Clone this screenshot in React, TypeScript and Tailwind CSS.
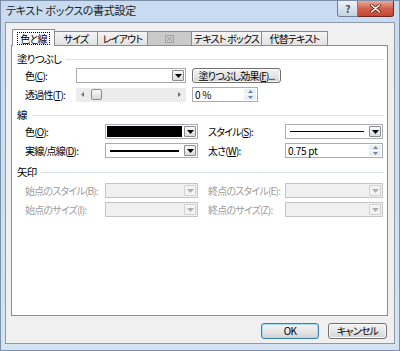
import React from 'react';

const font = "font-['Noto_Sans_CJK_JP',sans-serif] [font-feature-settings:'palt']";

function K({ children }: { children: React.ReactNode }) {
  return <span className="underline underline-offset-[1px]">{children}</span>;
}

function DownArrow({ disabled }: { disabled?: boolean }) {
  return (
    <svg width="7" height="4" viewBox="0 0 7 4">
      <path d="M0 0h7L3.5 4z" fill={disabled ? '#b0b0b0' : '#000'} />
    </svg>
  );
}

function DropBtn({ disabled }: { disabled?: boolean }) {
  return (
    <div
      className={`m-px flex w-[12px] items-center justify-center rounded-[1px] border ${
        disabled ? 'border-[#d2d2d2] bg-[#f3f3f3]' : 'border-[#8c8c8c] bg-linear-to-b from-[#f8f8f8] to-[#dcdcdc]'
      }`}
    >
      <DownArrow disabled={disabled} />
    </div>
  );
}

function Combo({ className, disabled, children }: { className: string; disabled?: boolean; children?: React.ReactNode }) {
  return (
    <div className={`flex h-[15px] shrink-0 border ${disabled ? 'border-[#c4c4c4] bg-[#f0f0f0]' : 'border-[#a9acb2] bg-white'} ${className}`}>
      <div className="flex min-w-0 flex-1 items-center p-px">{children}</div>
      <DropBtn disabled={disabled} />
    </div>
  );
}

function Spin({ className, value }: { className: string; value: string }) {
  return (
    <div className={`flex h-[15px] shrink-0 border border-[#a9acb2] bg-white ${className}`}>
      <div className="flex flex-1 items-center whitespace-pre pl-[2px] text-[10px] leading-none tracking-[-0.3px]">{value}</div>
      <div className="m-px flex w-[12px] flex-col gap-px">
        <div className="flex flex-1 items-center justify-center rounded-[1px] bg-[#e9eef5]">
          <svg width="5" height="3" viewBox="0 0 5 3">
            <path d="M0 3h5L2.5 0z" fill="#6d86a6" />
          </svg>
        </div>
        <div className="flex flex-1 items-center justify-center rounded-[1px] bg-[#e9eef5]">
          <svg width="5" height="3" viewBox="0 0 5 3">
            <path d="M0 0h5L2.5 3z" fill="#6d86a6" />
          </svg>
        </div>
      </div>
    </div>
  );
}

function Header({ title, className }: { title: string; className: string }) {
  return (
    <div className={`flex h-[14px] items-center gap-[5px] pl-[5px] pr-[3px] ${className}`}>
      <span className="whitespace-nowrap text-[10.5px] leading-none">{title}</span>
      <div className="h-px flex-1 bg-[#dbe0e6]" />
    </div>
  );
}

function Tab({ label, w, selected, disabled }: { label?: string; w: string; selected?: boolean; disabled?: boolean }) {
  if (selected) {
    return (
      <div className={`relative z-10 -mb-px flex h-[17px] ${w} items-center justify-center border border-b-0 border-[#898c95] bg-white`}>
        <span className="whitespace-nowrap border border-dotted border-black px-[2px] text-[10px] leading-[11px]">{label}</span>
      </div>
    );
  }
  if (disabled) {
    return (
      <div className={`-ml-px flex h-[14px] ${w} items-center justify-center border border-b-0 border-[#898c95] bg-[#cacaca]`}>
        <svg width="9" height="8" viewBox="0 0 9 8">
          <rect x="0.5" y="0.5" width="8" height="7" fill="none" stroke="#a2a2a2" />
          <path d="M2 2l5 4M7 2L2 6" stroke="#a2a2a2" />
        </svg>
      </div>
    );
  }
  return (
    <div className={`-ml-px flex h-[14px] ${w} items-center justify-center border border-b-0 border-[#898c95] bg-linear-to-b from-[#f4f4f4] to-[#e2e2e2]`}>
      <span className="whitespace-nowrap text-[10px] leading-none">{label}</span>
    </div>
  );
}

function Label({ w, disabled, children }: { w: string; disabled?: boolean; children: React.ReactNode }) {
  return (
    <span className={`${w} shrink-0 whitespace-nowrap text-[10px] leading-none ${disabled ? 'text-[#9c9c9c]' : 'text-black'}`}>
      {children}
    </span>
  );
}

function PushButton({ w, primary, children }: { w: string; primary?: boolean; children: React.ReactNode }) {
  return (
    <div
      className={`flex h-[16px] ${w} items-center justify-center whitespace-nowrap rounded-[3px] border bg-linear-to-b from-[#f3f3f3] via-[#e7e7e7] to-[#d2d2d2] text-[10px] leading-none ${
        primary ? 'border-[#3c7fb1] shadow-[inset_0_0_0_1px_#a8dcf5]' : 'border-[#707070] shadow-[inset_0_0_0_1px_#fbfbfb]'
      }`}
    >
      {children}
    </div>
  );
}

export default function App() {
  return (
    <div
      className={`${font} flex h-[351px] w-[400px] flex-col border border-[#7d90a8] bg-linear-to-b from-[#c8dbf0] to-[#d4e3f4] tracking-[-0.8px] text-black`}
    >
      {/* title bar */}
      <div className="flex h-[21px] shrink-0 items-start">
        <span className="whitespace-nowrap pl-[5px] pt-[4px] text-[11px] leading-none tracking-[-0.3px] text-[#1c1c1c]">
          テキスト ボックスの書式設定
        </span>
        <div className="flex-1" />
        <div className="flex h-[16px] w-[21px] items-center justify-center rounded-bl-[3px] border border-t-0 border-[#6f7f95] bg-linear-to-b from-[#eef2f7] to-[#c6d2e1] text-[10px] font-bold leading-none text-[#3a4a5e]">
          ?
        </div>
        <div className="flex h-[16px] w-[36px] items-center justify-center rounded-br-[3px] border border-l-0 border-t-0 border-[#6b2b24] bg-linear-to-b from-[#e9a89c] via-[#d0604c] to-[#c9452f]">
          <svg width="11" height="9" viewBox="0 0 11 9">
            <path d="M1.5 1l8 7M9.5 1l-8 7" stroke="#5a1f18" strokeWidth="3" strokeLinecap="round" />
            <path d="M1.5 1l8 7M9.5 1l-8 7" stroke="#fff" strokeWidth="1.6" strokeLinecap="round" />
          </svg>
        </div>
        <div className="w-[5px]" />
      </div>

      {/* client area */}
      <div className="mx-[4px] flex flex-1 flex-col border border-[#8e9aa8] bg-[#f0f0f0] px-[5px]">
        <div className="mt-[5px] flex h-[17px] items-end pl-px">
          <Tab label="色と線" w="w-[43px]" selected />
          <Tab label="サイズ" w="w-[44px]" />
          <Tab label="レイアウト" w="w-[51px]" />
          <Tab w="w-[45px]" disabled />
          <Tab label="テキスト ボックス" w="w-[71px]" />
          <Tab label="代替テキスト" w="w-[67px]" />
        </div>

        <div className="flex h-[271px] w-[377px] flex-col border border-[#898c95] bg-white">
          <Header title="塗りつぶし" className="mt-[6px]" />
          <div className="mt-[2px] flex h-[15px] items-center pl-[13px]">
            <Label w="w-[51px]">
              色(<K>C</K>):
            </Label>
            <Combo className="w-[110px]" />
            <div className="ml-[6px] flex h-[15px] w-[89px] items-center justify-center whitespace-nowrap rounded-[3px] border border-[#707070] bg-linear-to-b from-[#f3f3f3] via-[#e7e7e7] to-[#d2d2d2] text-[10px] leading-none shadow-[inset_0_0_0_1px_#fbfbfb]">
              塗りつぶし効果(<K>F</K>)...
            </div>
          </div>
          <div className="mt-[4px] flex h-[15px] items-center pl-[13px]">
            <Label w="w-[51px]">
              透過性(<K>T</K>):
            </Label>
            <div className="flex h-[14px] w-[110px] shrink-0 items-center bg-[#ececec] px-[5px]">
              <svg width="3" height="5" viewBox="0 0 3 5">
                <path d="M3 0v5L0 2.5z" fill="#707070" />
              </svg>
              <div className="ml-[7px] h-[11px] w-[11px] rounded-[2px] border border-[#8a8a8a] bg-linear-to-b from-[#fbfbfb] to-[#d8d8d8]" />
              <div className="flex-1" />
              <svg width="3" height="5" viewBox="0 0 3 5">
                <path d="M0 0v5L3 2.5z" fill="#707070" />
              </svg>
            </div>
            <Spin className="ml-[6px] w-[66px]" value="0 %" />
          </div>

          <Header title="線" className="mt-[6px]" />
          <div className="mt-[2px] flex h-[15px] items-center pl-[13px]">
            <Label w="w-[80px]">
              色(<K>O</K>):
            </Label>
            <Combo className="w-[93px]">
              <div className="h-full w-full bg-black" />
            </Combo>
            <div className="w-[10px] shrink-0" />
            <Label w="w-[77px]">
              スタイル(<K>S</K>):
            </Label>
            <Combo className="w-[98px]">
              <div className="mx-[3px] h-px w-full bg-black" />
            </Combo>
          </div>
          <div className="mt-[4px] flex h-[15px] items-center pl-[13px]">
            <Label w="w-[80px]">
              実線/点線(<K>D</K>):
            </Label>
            <Combo className="w-[93px]">
              <div className="mx-[3px] h-[2px] w-full bg-black" />
            </Combo>
            <div className="w-[10px] shrink-0" />
            <Label w="w-[77px]">
              太さ(<K>W</K>):
            </Label>
            <Spin className="w-[98px]" value="0.75 pt" />
          </div>

          <Header title="矢印" className="mt-[7px]" />
          <div className="mt-[4px] flex h-[15px] items-center pl-[13px]">
            <Label w="w-[80px]" disabled>
              始点のスタイル(B):
            </Label>
            <Combo className="w-[93px]" disabled />
            <div className="w-[10px] shrink-0" />
            <Label w="w-[77px]" disabled>
              終点のスタイル(E):
            </Label>
            <Combo className="w-[98px]" disabled />
          </div>
          <div className="mt-[4px] flex h-[15px] items-center pl-[13px]">
            <Label w="w-[80px]" disabled>
              始点のサイズ(I):
            </Label>
            <Combo className="w-[93px]" disabled />
            <div className="w-[10px] shrink-0" />
            <Label w="w-[77px]" disabled>
              終点のサイズ(Z):
            </Label>
            <Combo className="w-[98px]" disabled />
          </div>
        </div>

        <div className="mt-[7px] flex justify-end gap-[9px] pr-[2px]">
          <PushButton w="w-[58px]" primary>
            OK
          </PushButton>
          <PushButton w="w-[59px]">キャンセル</PushButton>
        </div>
      </div>
      <div className="h-[6px] shrink-0" />
    </div>
  );
}
